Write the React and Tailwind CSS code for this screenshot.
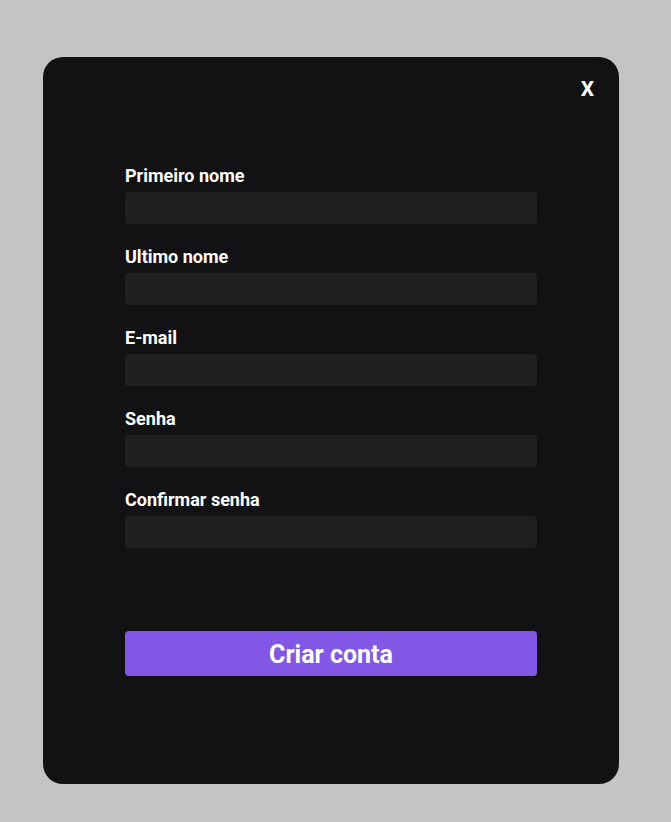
import React, { useState } from 'react';

const fields = [
  { id: 'firstName', label: 'Primeiro nome', type: 'text' },
  { id: 'lastName', label: 'Ultimo nome', type: 'text' },
  { id: 'email', label: 'E-mail', type: 'email' },
  { id: 'password', label: 'Senha', type: 'password' },
  { id: 'confirm', label: 'Confirmar senha', type: 'password' },
];

const App = () => {
  const [values, setValues] = useState({});

  const onChange = (id) => (e) => setValues({ ...values, [id]: e.target.value });

  return (
    <div className="min-h-screen w-full bg-[#c4c4c4] flex pl-[43px] pt-[57px] font-['Roboto',sans-serif]">
      <div className="w-[576px] h-[727px] bg-[#121214] rounded-[20px] flex flex-col">
        <div className="flex justify-end pt-[16px] pr-[21px]">
          <button className="text-white font-bold text-[21px] leading-[24px] px-1 py-1">X</button>
        </div>

        <form className="flex flex-col px-[82px] pt-[59px]" onSubmit={(e) => e.preventDefault()}>
          {fields.map((f) => (
            <div key={f.id} className="flex flex-col mb-[21px]">
              <label htmlFor={f.id} className="text-white font-bold text-[18px] leading-[24px] mb-[4px]">
                {f.label}
              </label>
              <input
                id={f.id}
                type={f.type}
                value={values[f.id] || ''}
                onChange={onChange(f.id)}
                className="h-[32px] w-full bg-[#202020] rounded-[4px] text-white px-3 outline-none"
              />
            </div>
          ))}

          <button
            type="submit"
            className="mt-[62px] h-[45px] w-full bg-[#8257e5] rounded-[4px] text-white font-bold text-[25px] leading-[48px]"
          >
            Criar conta
          </button>
        </form>
      </div>
    </div>
  );
};

export default App;
